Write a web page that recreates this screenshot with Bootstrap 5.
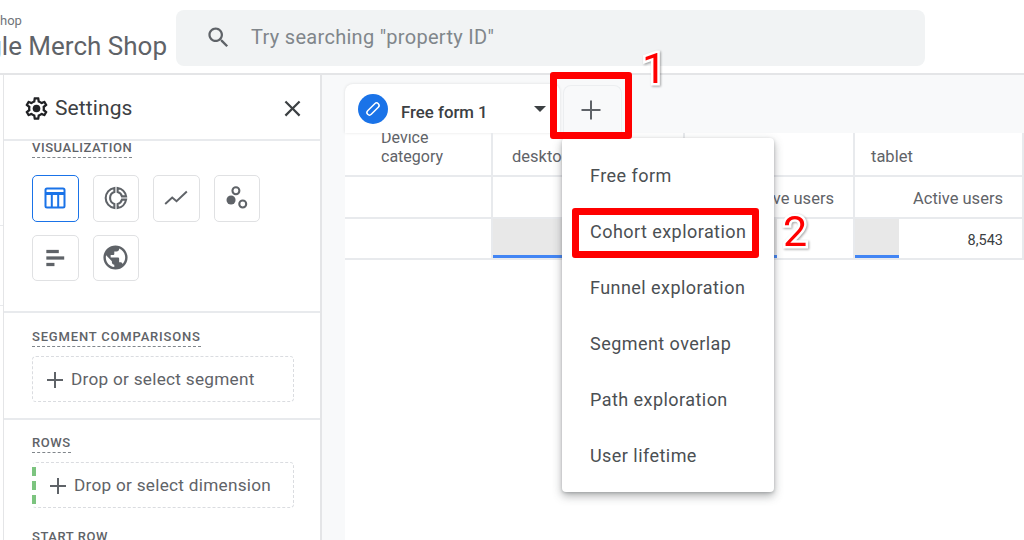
<!DOCTYPE html>
<html lang="en">
<head>
<meta charset="utf-8">
<title>Explore</title>
<link href="https://cdn.jsdelivr.net/npm/bootstrap@5.3.0/dist/css/bootstrap.min.css" rel="stylesheet">
<style>
html,body{height:540px;overflow:hidden;margin:0}
body{font-family:Roboto,"Liberation Sans",sans-serif;color:#5f6368;background:#fff}
.page-root{width:1024px;height:540px;position:relative;overflow:hidden}
.top-bar{height:75px;border-bottom:2px solid #e4e5e7}
.brand-box{width:176px;height:74px;overflow:hidden;flex:none}
.brand-small{font-size:13px;line-height:16px;padding-top:13px;color:#70757a}
.brand-name{font-size:26px;line-height:34px;white-space:nowrap;padding-right:9px;color:#5f6368}
.search-box{width:749px;height:56px;margin-top:10px;background:#f1f3f4;border-radius:8px;padding:0 0 2px 29px;gap:19px;font-size:20px;letter-spacing:.3px;color:#80868b}
.rail{width:3px;border-right:1px solid #e4e5e7;box-sizing:content-box;flex:none;position:relative}
.rail-lines{height:151px;border-bottom:1px solid #e8eaed}
.rail-lines2{height:80px;border-bottom:1px solid #e8eaed}
.side-panel{width:318px;height:465px;border-right:2px solid #e4e5e7;overflow:hidden;flex:none}
.panel-head{height:66px;border-bottom:2px solid #e8eaed;padding:3px 14px 0 19px;font-size:21px;letter-spacing:.1px;color:#3c4043}
.gear-icon{margin-right:5px}
.sec-label{font-size:13px;font-weight:500;letter-spacing:.55px;line-height:15px;border-bottom:1px dashed #80868b;display:inline-block;padding-bottom:2px;text-transform:uppercase;color:#5f6368}
.sec-one{height:173px;padding:0 28px;border-bottom:2px solid #e8eaed}
.label-high{margin-top:-1px;display:block;width:100px;height:18px;margin-bottom:0}
.viz-grid{display:flex;flex-wrap:wrap;gap:13px 14px;margin-top:17px;width:250px}
.viz-btn{width:46.5px;height:46.5px;border:1px solid #e0e1e3;border-radius:5px;background:#fff;padding:0}
.viz-on{border-color:#1a73e8}
.sec-two{height:107px;padding:11px 28px 0;border-bottom:2px solid #e8eaed}
.label-wide{letter-spacing:.82px}
.drop-box{width:262px;height:46px;border:1px dashed #dadce0;border-radius:4px;padding:1px 0 0 11px;gap:5px;font-size:17.2px;letter-spacing:.27px;margin-top:8px;white-space:nowrap}
.sec-three{padding:10px 28px 0}
.drop-marked{padding-left:14px;position:relative;border-left-color:transparent}
.green-dashes{position:absolute;left:-1px;top:4px;bottom:3px;width:4px;background:repeating-linear-gradient(#7cc47f 0 9px,transparent 9px 14px)}
.sec-four{margin-top:21px}
.canvas{flex:1;background:#f8f9fa;height:465px;padding:9px 0 0 23px}
.tab-row{height:49px;gap:3px}
.tab-main{width:215px;height:49px;background:#fff;border-radius:8px 8px 0 0;padding-left:13px;box-shadow:0 0 3px rgba(60,64,67,.15);font-size:16.8px;font-weight:500;color:#3c4043}
.pen-dot{width:30px;height:30px;border-radius:50%;background:#1a73e8;margin-right:13px;flex:none}
.tab-title{margin-top:8px}
.tab-caret{width:0;height:0;border-left:6px solid transparent;border-right:6px solid transparent;border-top:6px solid #3c4043;margin-left:46px}
.tab-add{width:59px;height:48px;margin-top:1px;padding-right:4px;background:#f8f9fa;border:1px solid #eceef0;border-bottom:0;border-radius:8px 8px 0 0}
.sheet{background:#fff;height:407px}
.data-grid{display:grid;grid-template-columns:148px 192px 170px 169px;grid-template-rows:44px 42px 41px;font-size:16.5px}
.cell{border-right:2px solid #e8eaed;border-bottom:2px solid #e8eaed;padding:0 19px;display:flex;align-items:center;overflow:hidden;position:relative;min-width:0}
.cell-head{padding-top:7px}
.cell-tablet{padding-left:16px}
.cell-metric{padding-top:5px}
.cell-end{justify-content:flex-end}
.cell-first{padding-left:36px;align-items:flex-end;padding-bottom:9px;line-height:19px;font-size:16px}
.cell-num{font-size:14.5px;color:#3c4043;padding-top:5px}
.bar-fill{position:absolute;left:0;top:0;bottom:0;background:#e8e8e8;border-bottom:3px solid #4285f4}
.bar-wide{width:100%}
.bar-mid{width:92px}
.bar-small{width:44px}
.num-text{position:relative}
.add-menu{position:absolute;left:562px;top:138px;width:212px;height:354px;margin:0;padding:9px 0;border:0;border-radius:4px;box-shadow:0 4px 10px rgba(60,64,67,.4),0 1px 3px rgba(60,64,67,.25);display:block}
.add-menu .dropdown-item{height:56px;padding:0 0 0 28px;display:flex;align-items:center;font-size:18px;letter-spacing:.45px;color:#4b4f53}
.red-frame{position:absolute;border:7px solid #f00;border-radius:3px;pointer-events:none;z-index:1100}
.frame-one{left:550px;top:72px;width:82px;height:67px}
.frame-two{left:572px;top:208px;width:187px;height:50px}
.red-num{position:absolute;z-index:1100;color:#f00;font-family:Roboto,sans-serif;font-size:43px;line-height:43px;-webkit-text-stroke:5px #fff;paint-order:stroke fill;filter:drop-shadow(1px 1px 1px rgba(0,0,0,.35))}
.num-one{left:642px;top:47px}
.num-two{left:783px;top:210px}
</style>
</head>
<body>
<div class="page-root">
  <header class="top-bar d-flex">
    <div class="brand-box">
      <div class="brand-small">hop</div>
      <div class="brand-name d-flex justify-content-end">Google Merch Shop</div>
    </div>
    <div class="search-box d-flex align-items-center">
      <svg width="27" height="27" viewBox="0 0 24 24" fill="#5f6368"><path d="M15.5 14h-.79l-.28-.27C15.41 12.59 16 11.11 16 9.5 16 5.91 13.09 3 9.5 3S3 5.91 3 9.5 5.91 16 9.5 16c1.61 0 3.09-.59 4.23-1.57l.27.28v.79l5 4.99L20.49 19l-4.99-5zm-6 0C7.01 14 5 11.99 5 9.5S7.01 5 9.5 5 14 7.01 14 9.5 11.99 14 9.5 14z"/></svg>
      <span>Try searching "property ID"</span>
    </div>
  </header>
  <div class="d-flex">
    <div class="rail"><div class="rail-lines"></div><div class="rail-lines2"></div></div>
    <aside class="side-panel">
      <div class="panel-head d-flex align-items-center">
        <svg width="27" height="27" viewBox="0 0 24 24" fill="#202124" class="gear-icon"><path d="M19.43 12.98c.04-.32.07-.64.07-.98 0-.34-.03-.66-.07-.98l2.11-1.65c.19-.15.24-.42.12-.64l-2-3.46c-.09-.16-.26-.25-.44-.25-.06 0-.12.01-.17.03l-2.49 1c-.52-.4-1.08-.73-1.69-.98l-.38-2.65C14.46 2.18 14.25 2 14 2h-4c-.25 0-.46.18-.49.42l-.38 2.65c-.61.25-1.17.59-1.69.98l-2.49-1c-.06-.02-.12-.03-.18-.03-.17 0-.34.09-.43.25l-2 3.46c-.13.22-.07.49.12.64l2.11 1.65c-.04.32-.07.65-.07.98 0 .33.03.66.07.98l-2.11 1.65c-.19.15-.24.42-.12.64l2 3.46c.09.16.26.25.44.25.06 0 .12-.01.17-.03l2.49-1c.52.4 1.08.73 1.69.98l.38 2.65c.03.24.24.42.49.42h4c.25 0 .46-.18.49-.42l.38-2.65c.61-.25 1.17-.59 1.69-.98l2.49 1c.06.02.12.03.18.03.17 0 .34-.09.43-.25l2-3.46c.12-.22.07-.49-.12-.64l-2.11-1.65zm-1.98-1.71c.04.31.05.52.05.73 0 .21-.02.43-.05.73l-.14 1.13.89.7 1.08.84-.7 1.21-1.27-.51-1.04-.42-.9.68c-.43.32-.84.56-1.25.73l-1.06.43-.16 1.13-.2 1.35h-1.4l-.19-1.35-.16-1.13-1.06-.43c-.43-.18-.83-.41-1.23-.71l-.91-.7-1.06.43-1.27.51-.7-1.21 1.08-.84.89-.7-.14-1.13c-.03-.31-.05-.54-.05-.74s.02-.43.05-.73l.14-1.13-.89-.7-1.08-.84.7-1.21 1.27.51 1.04.42.9-.68c.43-.32.84-.56 1.25-.73l1.06-.43.16-1.13.2-1.35h1.39l.19 1.35.16 1.13 1.06.43c.43.18.83.41 1.23.71l.91.7 1.06-.43 1.27-.51.7 1.21-1.07.85-.89.7.14 1.13z"/><circle cx="12" cy="12" r="3.4"/></svg>
        <span>Settings</span>
        <svg class="ms-auto" width="27" height="27" viewBox="0 0 24 24" fill="#3c4043"><path d="M19 6.41L17.59 5 12 10.59 6.41 5 5 6.41 10.59 12 5 17.59 6.41 19 12 13.41 17.59 19 19 17.59 13.41 12z"/></svg>
      </div>
      <section class="sec-one">
        <div class="sec-label label-high">Visualization</div>
        <div class="viz-grid">
          <button class="viz-btn viz-on d-flex align-items-center justify-content-center" type="button" aria-label="Table"><svg width="24" height="24" viewBox="0 0 24 24" fill="none" stroke="#1a73e8" stroke-width="2"><rect x="2.5" y="2.5" width="19" height="19" rx="1.5"/><path d="M2.5 7.5h19" stroke-width="3"/><path d="M8.8 8v13M15.2 8v13"/></svg></button>
          <button class="viz-btn d-flex align-items-center justify-content-center" type="button" aria-label="Donut"><svg width="26" height="26" viewBox="0 0 24 24" fill="none" stroke="#5f6368" stroke-width="1.9"><path d="M10.5 2.7A9.4 9.4 0 0 0 10.5 21.3V17.5A5.8 5.8 0 0 1 10.5 6.5Z"/><path d="M13.5 2.7A9.4 9.4 0 0 1 21.3 10.5H17.5A5.8 5.8 0 0 0 13.5 6.5Z"/><path d="M21.3 13.5A9.4 9.4 0 0 1 13.5 21.3V17.5A5.8 5.8 0 0 0 17.5 13.5Z"/></svg></button>
          <button class="viz-btn d-flex align-items-center justify-content-center" type="button" aria-label="Line"><svg width="26" height="26" viewBox="0 0 24 24" fill="none" stroke="#5f6368" stroke-width="1.8"><path d="M2 17.5l6.5-6 4 3.5L22 6"/></svg></button>
          <button class="viz-btn d-flex align-items-center justify-content-center" type="button" aria-label="Scatter"><svg width="26" height="26" viewBox="0 0 24 24" fill="#5f6368"><circle cx="6.5" cy="13.8" r="4.2"/><circle cx="11" cy="5.3" r="3.2" fill="none" stroke="#5f6368" stroke-width="1.9"/><circle cx="17.3" cy="17.5" r="3.2" fill="none" stroke="#5f6368" stroke-width="1.9"/></svg></button>
          <button class="viz-btn d-flex align-items-center justify-content-center" type="button" aria-label="Bar"><svg width="26" height="26" viewBox="0 0 24 24" fill="#5f6368"><rect x="4" y="4.5" width="11.5" height="3"/><rect x="4" y="10.5" width="16.5" height="3"/><rect x="4" y="16.5" width="7.5" height="3"/></svg></button>
          <button class="viz-btn d-flex align-items-center justify-content-center" type="button" aria-label="Geo"><svg width="29" height="29" viewBox="0 0 24 24" fill="#5f6368"><path d="M12 2C6.48 2 2 6.48 2 12s4.48 10 10 10 10-4.48 10-10S17.52 2 12 2zm-1 17.93c-3.95-.49-7-3.85-7-7.93 0-.62.08-1.21.21-1.79L9 15v1c0 1.1.9 2 2 2v1.93zm6.9-2.54c-.26-.81-1-1.39-1.9-1.39h-1v-3c0-.55-.45-1-1-1H8v-2h2c.55 0 1-.45 1-1V7h2c1.1 0 2-.9 2-2v-.41c2.93 1.19 5 4.06 5 7.41 0 2.08-.8 3.97-2.1 5.39z"/></svg></button>
        </div>
      </section>
      <section class="sec-two">
        <div class="sec-label label-wide">Segment comparisons</div>
        <div class="drop-box d-flex align-items-center">
          <svg width="22" height="22" viewBox="0 0 22 22" stroke="#5f6368" stroke-width="2"><path d="M11 3v16M3 11h16"/></svg>
          <span>Drop or select segment</span>
        </div>
      </section>
      <section class="sec-three">
        <div class="sec-label">Rows</div>
        <div class="drop-box drop-marked d-flex align-items-center">
          <span class="green-dashes"></span>
          <svg width="22" height="22" viewBox="0 0 22 22" stroke="#5f6368" stroke-width="2"><path d="M11 3v16M3 11h16"/></svg>
          <span>Drop or select dimension</span>
        </div>
        <div class="sec-label sec-four">Start row</div>
      </section>
    </aside>
    <main class="canvas">
      <div class="tab-row d-flex">
        <div class="tab-main d-flex align-items-center">
          <span class="pen-dot d-flex align-items-center justify-content-center"><svg width="20" height="20" viewBox="0 0 20 20" fill="none" stroke="#fff" stroke-width="1.5"><rect x="7.5" y="2.5" width="5" height="15" rx="2.5" transform="rotate(45 10 10)"/></svg></span>
          <span class="tab-title">Free form 1</span>
          <span class="tab-caret"></span>
        </div>
        <div class="tab-add d-flex align-items-center justify-content-center"><svg width="24" height="24" viewBox="0 0 24 24" stroke="#5f6368" stroke-width="2"><path d="M12 2.5v19M2.5 12h19"/></svg></div>
      </div>
      <div class="sheet">
        <div class="data-grid">
          <div class="cell cell-first"><span>Device<br>category</span></div>
          <div class="cell cell-head">desktop</div>
          <div class="cell cell-head"></div>
          <div class="cell cell-head cell-tablet">tablet</div>
          <div class="cell"></div>
          <div class="cell cell-end cell-metric"></div>
          <div class="cell cell-end cell-metric">Active users</div>
          <div class="cell cell-end cell-metric">Active users</div>
          <div class="cell"></div>
          <div class="cell cell-end cell-num"><span class="bar-fill bar-wide"></span></div>
          <div class="cell cell-end cell-num"><span class="bar-fill bar-mid"></span></div>
          <div class="cell cell-end cell-num"><span class="bar-fill bar-small"></span><span class="num-text">8,543</span></div>
        </div>
      </div>
    </main>
  </div>
  <ul class="dropdown-menu show add-menu">
    <li><a class="dropdown-item" href="#">Free form</a></li>
    <li><a class="dropdown-item" href="#">Cohort exploration</a></li>
    <li><a class="dropdown-item" href="#">Funnel exploration</a></li>
    <li><a class="dropdown-item" href="#">Segment overlap</a></li>
    <li><a class="dropdown-item" href="#">Path exploration</a></li>
    <li><a class="dropdown-item" href="#">User lifetime</a></li>
  </ul>
  <div class="red-frame frame-one"></div>
  <div class="red-frame frame-two"></div>
  <div class="red-num num-one">1</div>
  <div class="red-num num-two">2</div>
</div>
<script src="https://cdn.jsdelivr.net/npm/bootstrap@5.3.0/dist/js/bootstrap.bundle.min.js"></script>
</body>
</html>
